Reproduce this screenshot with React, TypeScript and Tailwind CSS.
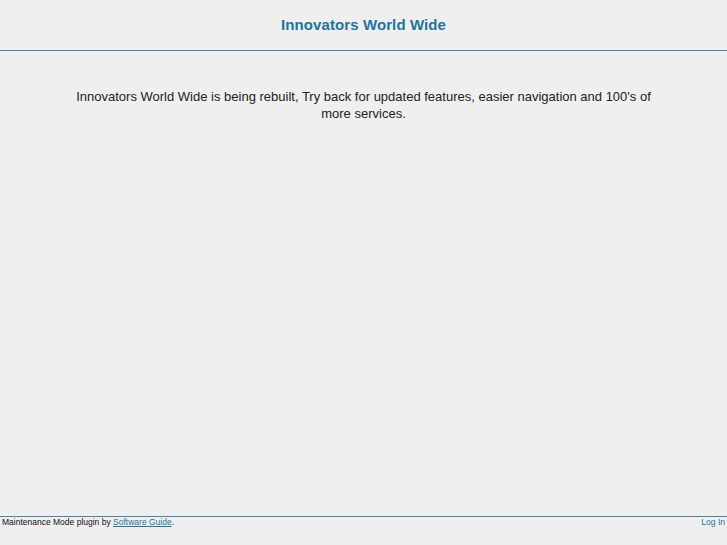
export default function App() {
  return (
    <div
      className="min-h-[545px] h-[545px] bg-[#efefef] flex flex-col"
      style={{ fontFamily: '"Liberation Sans", Arial, sans-serif' }}
    >
      <header className="h-[51px] border-b border-[#4b82a8] flex items-center justify-center">
        <h1 className="text-[15px] font-bold text-[#21759b] mt-[1px] tracking-[0.1px]">Innovators World Wide</h1>
      </header>

      <main className="flex-1 pt-[37px]">
        <p className="w-[600px] mx-auto text-center text-[13px] leading-[17px] text-[#222]">
          Innovators World Wide is being rebuilt, Try back for updated features, easier navigation and 100's of
          more services.
        </p>
      </main>

      <footer className="h-[29px] border-t border-[#4b82a8] flex justify-between px-[2px] text-[8.5px] leading-[11px]">
        <span className="text-[#111]">
          Maintenance Mode plugin by{' '}
          <a href="#" className="text-[#21759b] underline">
            Software Guide
          </a>
          .
        </span>
        <a href="#" className="text-[#21759b]">
          Log In
        </a>
      </footer>
    </div>
  );
}
